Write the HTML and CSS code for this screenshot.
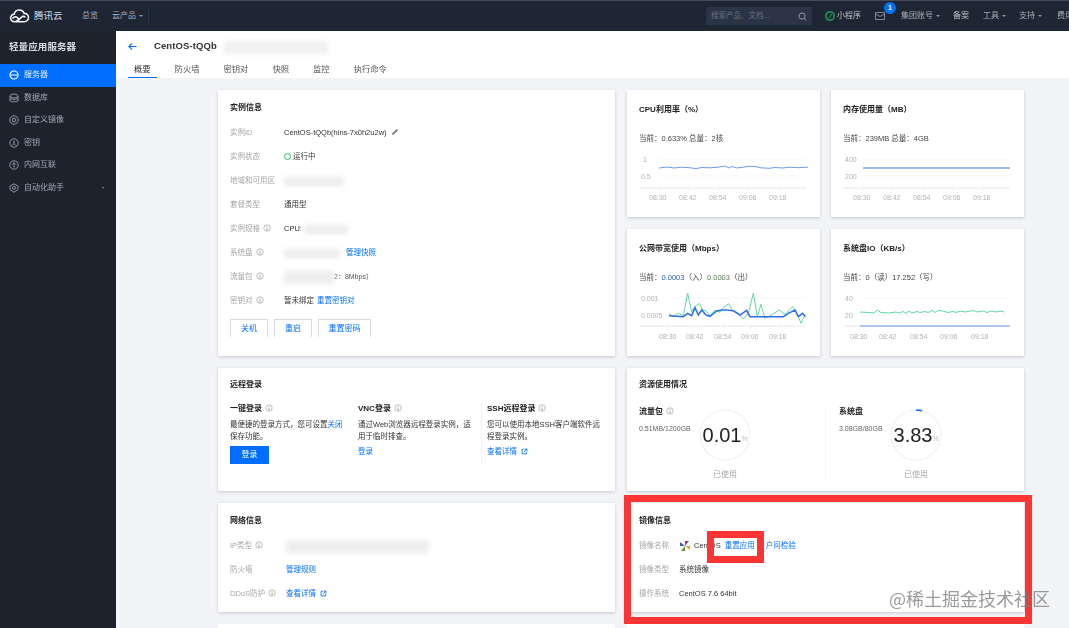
FILE: index.html
```html
<!DOCTYPE html>
<html lang="zh-CN">
<head>
<meta charset="utf-8">
<title>轻量应用服务器</title>
<link rel="stylesheet" href="styles.css">
</head>
<body>
<svg class="defs" width="0" height="0">
  <symbol id="info" viewBox="0 0 10 10"><circle cx="5" cy="5" r="4" fill="none" stroke="#999" stroke-width=".8"/><path d="M5 4.2v3M4.2 7.2h1.6M5 2.5v.9" stroke="#888" stroke-width=".8" fill="none"/></symbol>
  <symbol id="ext" viewBox="0 0 10 10"><path d="M8 6v2.5H1.5V2H4M5 1.5h3.5V5M8.5 1.5 4.5 5.5" fill="none" stroke="#006eff" stroke-width="1.2"/></symbol>
</svg>
<div class="page">
  <header class="topbar">
    <div class="brand">
      <svg class="logo" viewBox="0 0 22 14"><path d="M6 13a4 4 0 0 1-.6-8A5.6 5.6 0 0 1 16 4.200a4.400 4.400 0 0 1 0 8.800H8.500L13 8.300c1.200-1.200 3-1.200 4 0M6 13c2 0 3-1 4.500-2.500M10.500 10.500 8.500 8.500C7 7 4 8 4 10" fill="none" stroke="#f2f4f7" stroke-width="1.700"/></svg>
      <span class="brand-name">腾讯云</span>
    </div>
    <nav class="topnav"><span>总览</span><span class="caret">云产品</span></nav>
    <div class="top-divider"></div>
    <div class="topright">
      <div class="search"><span>搜索产品、文档...</span>
        <svg viewBox="0 0 10 10"><circle cx="4.500" cy="4.500" r="3.400" fill="none" stroke="#99a3b3"/><path d="m7 7 2.300 2.300" stroke="#99a3b3"/></svg>
      </div>
      <div class="mini"><svg viewBox="0 0 10 10"><circle cx="5" cy="5" r="4.200" fill="none" stroke="#17b35a" stroke-width="1.300"/><path d="M3.500 6.500C5 6 6.500 5 6.200 3" fill="none" stroke="#17b35a"/></svg><span>小程序</span></div>
      <div class="mail"><svg viewBox="0 0 10 8"><path d="M.5.500h9v7h-9zM.5 2 5 4.500 9.500 2" fill="none" stroke="#9aa3b0" stroke-width=".8"/></svg><span class="badge">1</span></div>
      <span class="caret acct">集团账号</span>
      <span class="beian">备案</span>
      <span class="caret tool">工具</span>
      <span class="caret support">支持</span>
      <span class="fee">费用</span>
    </div>
  </header>
  <div class="body">
    <aside class="side">
      <h2>轻量应用服务器</h2>
      <ul>
        <li class="on"><svg viewBox="0 0 10 10"><circle cx="5" cy="5" r="4" fill="none" stroke="#fff" stroke-width="1.200"/><path d="M1.500 5h7" stroke="#fff"/></svg>服务器</li>
        <li><svg viewBox="0 0 10 10"><ellipse cx="5" cy="3" rx="4" ry="2" fill="none" stroke="#8f96a3"/><path d="M1 3v5c0 1 8 1 8 0V3M1 5.500c0 1 8 1 8 0" fill="none" stroke="#8f96a3"/></svg>数据库</li>
        <li><svg viewBox="0 0 10 10"><circle cx="5" cy="5" r="4.200" fill="none" stroke="#8f96a3"/><circle cx="5" cy="5" r="1.800" fill="none" stroke="#8f96a3"/></svg>自定义镜像</li>
        <li><svg viewBox="0 0 10 10"><circle cx="5" cy="5" r="4.200" fill="none" stroke="#8f96a3"/><path d="M5 2.500v3L3 7.500M5 5.500l2 2" fill="none" stroke="#8f96a3"/></svg>密钥</li>
        <li><svg viewBox="0 0 10 10"><circle cx="5" cy="5" r="4.200" fill="none" stroke="#8f96a3"/><path d="M5 2.500v5M3.300 4.500 5 2.800l1.700 1.700" fill="none" stroke="#8f96a3"/></svg>内网互联</li>
        <li class="more"><svg viewBox="0 0 10 10"><path d="M5 .8 9 3v3.500L5 9.300 1 6.500V3z" fill="none" stroke="#8f96a3"/><circle cx="5" cy="4.800" r="1.500" fill="none" stroke="#8f96a3"/></svg>自动化助手<i></i></li>
      </ul>
    </aside>
    <div class="content">
      <section class="pagehead">
        <div class="crumb">
          <svg class="back" viewBox="0 0 10 10"><path d="M9.500 5H1M4.500 1.500 1 5l3.500 3.500" fill="none" stroke="#006eff" stroke-width="1.200"/></svg>
          <strong>CentOS-tQQb</strong><span class="smudge sm-title"></span>
        </div>
        <div class="tabs"><span class="active">概要</span><span>防火墙</span><span>密钥对</span><span>快照</span><span>监控</span><span>执行命令</span></div>
      </section>
      <main class="main">
        <div class="col">
          <section class="card instance">
            <h3>实例信息</h3>
            <div class="row"><label>实例ID</label><div>CentOS-tQQb(hins-7x0h2u2w)<svg class="pen" viewBox="0 0 8 8"><path d="M1 7l.4-1.700L5.700 1 7 2.300 2.700 6.600z" fill="#777"/></svg></div></div>
            <div class="row"><label>实例状态</label><div class="status"><i></i>运行中</div></div>
            <div class="row"><label>地域和可用区</label><div><span class="smudge sm-a"></span></div></div>
            <div class="row"><label>套餐类型</label><div>通用型</div></div>
            <div class="row"><label>实例规格<svg class="ii"><use href="#info"/></svg></label><div>CPU: <span class="smudge sm-b"></span></div></div>
            <div class="row"><label>系统盘<svg class="ii"><use href="#info"/></svg></label><div><span class="smudge sm-c"></span><a>管理快照</a></div></div>
            <div class="row"><label>流量包<svg class="ii"><use href="#info"/></svg></label><div><span class="smudge sm-d"></span><span class="small">2：8Mbps）</span></div></div>
            <div class="row"><label>密钥对<svg class="ii"><use href="#info"/></svg></label><div>暂未绑定 <a class="tight">重置密钥对</a></div></div>
            <div class="btns"><button>关机</button><button>重启</button><button class="wide">重置密码</button></div>
          </section>
          <section class="card remote">
            <h3>远程登录</h3>
            <div class="remote-cols">
              <div class="rc rc1"><h4>一键登录<svg class="ii"><use href="#info"/></svg></h4><p>最便捷的登录方式，您可设置<a class="nb">关闭</a><br>保存功能。</p><button class="primary">登录</button></div>
              <div class="rc rc2"><h4>VNC登录<svg class="ii"><use href="#info"/></svg></h4><p>通过Web浏览器远程登录实例，适用于临时排查。</p><a>登录</a></div>
              <div class="rc rc3"><h4>SSH远程登录<svg class="ii"><use href="#info"/></svg></h4><p>您可以使用本地SSH客户端软件远程登录实例。</p><a>查看详情<svg class="ext"><use href="#ext"/></svg></a></div>
            </div>
          </section>
          <section class="card net">
            <h3>网络信息</h3>
            <div class="row row-net"><label>IP类型<svg class="ii"><use href="#info"/></svg></label><div><span class="smudge sm-ip"></span></div></div>
            <div class="row row-net"><label>防火墙</label><div><a class="flush">管理规则</a></div></div>
            <div class="row row-net"><label>DDoS防护<svg class="ii"><use href="#info"/></svg></label><div><a class="flush">查看详情<svg class="ext"><use href="#ext"/></svg></a></div></div>
          </section>
          <section class="card stub"></section>
        </div>
        <div class="col">
          <div class="pair">
            <section class="card metric">
              <h3>CPU利用率（%）</h3>
              <p>当前：0.633% 总量：2核</p>
              <svg class="chart" viewBox="0 0 169 56">
                <path class="grid" d="M20 9H167M20 26H167"/><path class="axis" d="M0 38H167M20 38v2M50 38v2M80 38v2M110 38v2M140 38v2"/>
                <text x="4" y="12">1</text><text x="2" y="29">0.5</text>
                <text x="10" y="50">08:30</text><text x="40" y="50">08:42</text><text x="70" y="50">08:54</text><text x="100" y="50">09:06</text><text x="130" y="50">09:18</text>
                <path class="blue" d="M20 18l8-1 7 1 7-.8 8 .5 7 .8 6-1 8 .3 8-.6 7-1.200 4 2 3-1.500 5 1.500 6-.8 7-1 5 .3 6 1.300 8 .5 6-.8 8 .5 6-.8 9 .5 8-.5 6 .5"/>
              </svg>
            </section>
            <section class="card metric">
              <h3>内存使用量（MB）</h3>
              <p>当前：239MB 总量：4GB</p>
              <svg class="chart" viewBox="0 0 169 56">
                <path class="grid" d="M20 9H167M20 26H167"/><path class="axis" d="M0 38H167M20 38v2M50 38v2M80 38v2M110 38v2M140 38v2"/>
                <text x="2" y="12">400</text><text x="2" y="29">200</text>
                <text x="10" y="50">08:30</text><text x="40" y="50">08:42</text><text x="70" y="50">08:54</text><text x="100" y="50">09:06</text><text x="130" y="50">09:18</text>
                <path class="mem" d="M20 18H167"/>
              </svg>
            </section>
            <section class="card metric">
              <h3>公网带宽使用（Mbps）</h3>
              <p>当前：<b class="tb">0.0003</b>（入）<b class="tg">0.0003</b>（出）</p>
              <svg class="chart" viewBox="0 0 169 56">
                <path class="grid" d="M29 9H167M29 26H167"/><path class="axis" d="M0 37H167M30 37v2M57 37v2M85 37v2M112 37v2M140 37v2"/>
                <text x="2" y="12">0.001</text><text x="2" y="29">0.0005</text>
                <text x="20" y="50">08:30</text><text x="47" y="50">08:42</text><text x="75" y="50">08:54</text><text x="102" y="50">09:06</text><text x="130" y="50">09:18</text>
                <g transform="translate(-19 -64) scale(.3333)">
                  <path class="green3" d="M147 265 160 275 175 265 190 272 203 205 215 260 225 245 238 235 248 255 258 258 270 272 285 255 300 262 313 245 326 236 340 260 355 265 370 282 385 265 400 205 412 275 423 238 435 280 450 272 478 255 495 268 518 245 530 262 543 295 555 270"/>
                  <path class="blue3" d="M147 272 190 275 203 265 215 272 225 248 235 270 245 255 258 270 270 274 290 258 305 255 320 255 340 257 360 270 380 256 390 275 490 275 505 265 525 255 535 275 548 265 556 275"/>
                </g>
              </svg>
            </section>
            <section class="card metric">
              <h3>系统盘IO（KB/s）</h3>
              <p>当前：0（读）17.252（写）</p>
              <svg class="chart" viewBox="0 0 169 56">
                <path class="grid" d="M17 9H167M17 26H167"/><path class="axis" d="M0 37H167"/>
                <text x="2" y="12">40</text><text x="2" y="29">20</text>
                <text x="7" y="50">08:30</text><text x="36" y="50">08:42</text><text x="67" y="50">08:54</text><text x="97" y="50">09:06</text><text x="128" y="50">09:18</text>
                <path class="green" d="M17 23l8 .5 6 .5 3-3 4 2.500 8 .5 7-1 3 1 4-1.500 3 2 3-2.500 3 2 5-1.500 3 1 5-1 3 1 4-2 3 2 3-2 5 .5 5 1.500 5-1 3 1 4-1.500 5 1 6-1 3-.5 3 1.500 6-1 4 1.500 4-1.500 5 1 5-1 3 1"/>
                <path class="blue" d="M17 37H167"/>
              </svg>
            </section>
          </div>
          <section class="card usage">
            <h3>资源使用情况</h3>
            <div class="usage-cols">
              <div class="uc uc1">
                <div class="ut"><h4>流量包<svg class="ii"><use href="#info"/></svg></h4><small>0.51MB/1200GB</small></div>
                <div class="ring"><svg viewBox="0 0 52 52"><circle cx="26" cy="26" r="25" fill="none" stroke="#f3f4f7" stroke-width="1.500"/></svg><div class="num">0.01<em>%</em></div><span>已使用</span></div>
              </div>
              <div class="uc uc2">
                <div class="ut"><h4>系统盘</h4><small>3.08GB/80GB</small></div>
                <div class="ring"><svg viewBox="0 0 52 52"><circle cx="26" cy="26" r="25" fill="none" stroke="#f3f4f7" stroke-width="1.500"/><path d="M26 1a25 25 0 0 1 6 .8" fill="none" stroke="#006eff" stroke-width="1.500"/></svg><div class="num">3.83<em>%</em></div><span>已使用</span></div>
              </div>
            </div>
          </section>
          <section class="card image">
            <h3>镜像信息</h3>
            <div class="row row-img"><label>镜像名称</label><div class="img-name"><svg class="centos" viewBox="0 0 10 10"><path d="M5 5V0h4z" fill="#9c3a8f"/><path d="M5 5h5v4z" fill="#e8a13a"/><path d="M5 5v5H1z" fill="#5f8f3a"/><path d="M5 5H0V1z" fill="#3b5ea8"/></svg>CentOS<a>重置应用</a><a class="after">户问检验</a></div></div>
            <div class="row row-img"><label>镜像类型</label><div>系统镜像</div></div>
            <div class="row row-img"><label>操作系统</label><div>CentOS 7.6 64bit</div></div>
          </section>
          <section class="card stub"></section>
        </div>
      </main>
    </div>
  </div>
</div>
<div class="mark mark-big"></div>
<div class="mark mark-small"></div>
<div class="watermark">@稀土掘金技术社区</div>
</body>
</html>
```

FILE: styles.css
```css
* { box-sizing: border-box; }
html, body { margin: 0; height: 628px; overflow: hidden; background: #f3f4f7; }
body { position: relative; font: 7.5px/12px "Liberation Sans", "Noto Sans CJK SC", sans-serif; color: #333; }
h2, h3, h4, p, ul { margin: 0; padding: 0; }
.defs { position: absolute; }
.page { height: 628px; overflow: hidden; filter: blur(.55px); }

.topbar { height: 31px; display: flex; align-items: center; background: #1f2633; border-top: 1px solid #444b57; color: #a9b0bc; font-size: 8px; white-space: nowrap; }
.brand { display: flex; align-items: center; flex: none; width: 82px; padding-left: 9px; }
.logo { width: 21px; height: 14px; }
.brand-name { margin-left: 4px; font-size: 9.500px; color: #d8dce2; }
.topnav { display: flex; gap: 14px; flex: none; width: 66px; }
.caret::after { content: ""; display: inline-block; margin-left: 3px; vertical-align: middle; border: 2px solid transparent; border-top: 2.500px solid #8e96a3; border-bottom: 0; }
.top-divider { width: 1px; height: 14px; flex: none; background: #2e3746; }
.topright { display: flex; align-items: center; margin-left: 557px; flex: none; }
.search { display: flex; align-items: center; justify-content: space-between; width: 106px; height: 18px; padding: 0 5px; background: #2a3446; color: #667082; font-size: 7.500px; }
.search svg { width: 9px; height: 9px; }
.mini { display: flex; align-items: center; gap: 2px; margin-left: 13px; color: #c0c5cd; }
.mini svg { width: 10px; height: 10px; }
.mail { position: relative; display: flex; margin-left: 14px; width: 10px; }
.mail svg { width: 10px; height: 8px; }
.badge { position: absolute; left: 9px; top: -10px; width: 12px; height: 12px; border-radius: 50%; background: #006eff; color: #fff; font: bold 7px/12px "Liberation Sans", sans-serif; text-align: center; }
.acct { margin-left: 16px; }
.beian { margin-left: 13px; color: #c0c5cd; }
.tool { margin-left: 14px; }
.support { margin-left: 13px; }
.fee { margin-left: 15px; }

.body { display: flex; height: 597px; }
.side { width: 116px; flex: none; background: #1e222d; color: #a3a9b4; font-size: 8px; }
.side h2 { padding: 10px 0 0 9px; height: 33px; font-size: 9.500px; line-height: 12px; font-weight: bold; color: #d6d9de; letter-spacing: .1px; }
.side ul { list-style: none; }
.side li { position: relative; display: flex; align-items: center; gap: 5px; height: 22.500px; padding-left: 9px; }
.side li svg { width: 10px; height: 10px; flex: none; }
.side li.on { background: #006eff; color: #e8f1ff; }
.more i { position: absolute; right: 12px; top: 10px; border: 1.500px solid transparent; border-top: 2px solid #8e96a3; border-bottom: 0; }

.content { flex: 1; min-width: 0; }
.pagehead { height: 47px; background: #fff; padding-left: 12px; }
.crumb { display: flex; align-items: center; height: 29px; padding-top: 1px; }
.back { width: 9px; height: 9px; }
.crumb strong { margin-left: 17px; font-size: 9.500px; letter-spacing: .1px; color: #333; }
.smudge { display: inline-block; vertical-align: middle; background: #ededed; filter: blur(2.500px); }
.sm-title { width: 104px; height: 13px; margin-left: 7px; margin-top: 3px; background: #f0f0f0; }
.tabs { display: flex; height: 18px; font-size: 8.300px; color: #555; }
.tabs span { padding: 3px 6px 0; margin-right: 12px; }
.tabs .active { border-bottom: 1.500px solid #006eff; color: #333; height: 17.500px; margin-right: 12px; }

.main { display: flex; gap: 12px; padding: 12px 0 0 102px; }
.col { width: 397px; flex: none; display: flex; flex-direction: column; gap: 12px; }
.pair { display: grid; grid-template-columns: 193px 193px; gap: 12px 11px; }
.card { background: #fff; padding: 12px; box-shadow: 0 1px 3px rgba(40, 50, 70, .22); }
.card h3 { font-size: 8px; line-height: 12px; font-weight: bold; color: #222; }
.instance { height: 266px; }
.instance h3 { margin-bottom: 7px; }
.row { display: grid; grid-template-columns: 54px 1fr; height: 24px; align-items: center; }
.row label { color: #a6a6a6; white-space: nowrap; }
.row > div { white-space: nowrap; }
.ii { width: 8px; height: 8px; margin-left: 3px; vertical-align: -1px; }
.pen { width: 8px; height: 8px; margin-left: 4px; vertical-align: -1px; }
.status i { display: inline-block; width: 7px; height: 7px; margin-right: 2px; border: 1.500px solid #29b86d; border-radius: 50%; vertical-align: -1px; }
a { color: #006eff; }
.sm-a { width: 60px; height: 9px; }
.sm-b { width: 44px; height: 9px; }
.sm-c { width: 56px; height: 9px; }
.sm-c + a { margin-left: 6px; }
.sm-d { width: 50px; height: 13px; }
.small { font-size: 7px; color: #555; }
.tight { margin-left: 1px; }
.btns { display: flex; gap: 6px; margin-top: 6px; }
.btns button { width: 38px; height: 18px; padding: 0; border: 1px solid #d8dbe0; border-bottom: 0; background: #fff; color: #006eff; font: 8px/16px "Liberation Sans", "Noto Sans CJK SC", sans-serif; }
.btns .wide { width: 53px; }

.remote { height: 123px; padding-top: 11px; }
.remote-cols { display: flex; margin-top: 12px; }
.rc { flex: none; width: 128px; padding-right: 12px; }
.rc h4 { font-size: 8px; line-height: 12px; color: #222; font-weight: bold; }
.rc p { margin-top: 4px; line-height: 11.500px; color: #333; }
.rc1 p, .rc2 p { height: 23px; }
.nb { white-space: nowrap; }
.rc3 { width: 125px; margin-left: -5px; padding-left: 5px; padding-right: 6px; border-left: 1px solid #f0f1f3; height: 62px; }
.rc2 > a, .rc3 > a { display: block; margin-top: 4px; }
.primary { display: block; width: 39px; height: 18px; margin-top: 4px; padding: 0; border: 0; background: #006eff; color: #fff; font: 8px/18px "Liberation Sans", "Noto Sans CJK SC", sans-serif; }
.ext { width: 7px; height: 7px; margin-left: 4px; vertical-align: -.5px; }

.net { height: 109px; }
.net h3, .image h3 { margin-bottom: 7px; }
.row-net { grid-template-columns: 56px 1fr; }
.sm-ip { width: 143px; height: 13px; }
.card.stub { height: 4px; padding: 0; box-shadow: none; }

.metric { height: 127px; padding-top: 14px; }
.metric p { margin-top: 17px; color: #444; }
.metric b { font-weight: normal; }
.tb { color: #1f5fb0; }
.tg { color: #5a7a5a; }
.chart { display: block; width: 169px; height: 56px; margin-top: 5px; }
.chart text { font-size: 7px; fill: #b2b2b2; }
.grid { stroke: #f3f3f3; stroke-width: .7; fill: none; }
.axis { stroke: #e2e2e2; stroke-width: .8; fill: none; }
.blue { stroke: #6c9ce8; stroke-width: 1; fill: none; }
.mem { stroke: #7ea6e6; stroke-width: 1.500; fill: none; }
.green { stroke: #61d6a2; stroke-width: 1; fill: none; }
.green3 { stroke: #61d6a2; stroke-width: 3; fill: none; }
.blue3 { stroke: #2f6fe0; stroke-width: 4.500; fill: none; }

.usage { height: 123px; padding-top: 11px; }
.usage-cols { display: flex; margin-top: 15px; }
.uc { display: flex; height: 75px; }
.uc1 { flex: none; width: 186px; }
.uc2 { padding-left: 13px; border-left: 1px solid #f3f4f7; flex: 1; }
.ut h4 { font-size: 8px; line-height: 12px; color: #222; font-weight: bold; }
.ut small { display: block; margin-top: 5px; font-size: 7px; color: #666; white-space: nowrap; }
.uc1 .ut { width: 60px; }
.uc2 .ut { width: 51px; }
.ring { position: relative; width: 52px; margin-top: 3px; text-align: center; }
.ring svg { display: block; width: 52px; height: 52px; }
.ring span { display: block; margin-top: 8px; color: #a6a6a6; font-size: 8px; }
.num { position: absolute; left: -6px; right: 0; top: 13px; font-size: 20px; line-height: 26px; color: #222; white-space: nowrap; }
.num em { position: absolute; font-size: 7px; line-height: 10px; top: 12px; font-style: normal; color: #bbb; }

.image { height: 109px; }
.row-img { grid-template-columns: 40px 1fr; }
.img-name { display: flex; align-items: center; }
.centos { width: 10px; height: 10px; margin-right: 4px; margin-left: 1px; }
.img-name a { margin-left: 4px; }
.img-name .after { margin-left: 11px; }

.mark { position: absolute; border: 7px solid #fb3434; }
.mark-big { left: 624px; top: 495px; width: 408px; height: 129px; }
.mark-small { left: 707px; top: 531px; width: 57px; height: 32px; }
.watermark { position: absolute; left: 889px; top: 587px; font: 18px/22px "Noto Sans CJK SC", sans-serif; color: rgba(120, 120, 120, .75); white-space: nowrap; filter: blur(.3px); }
```
